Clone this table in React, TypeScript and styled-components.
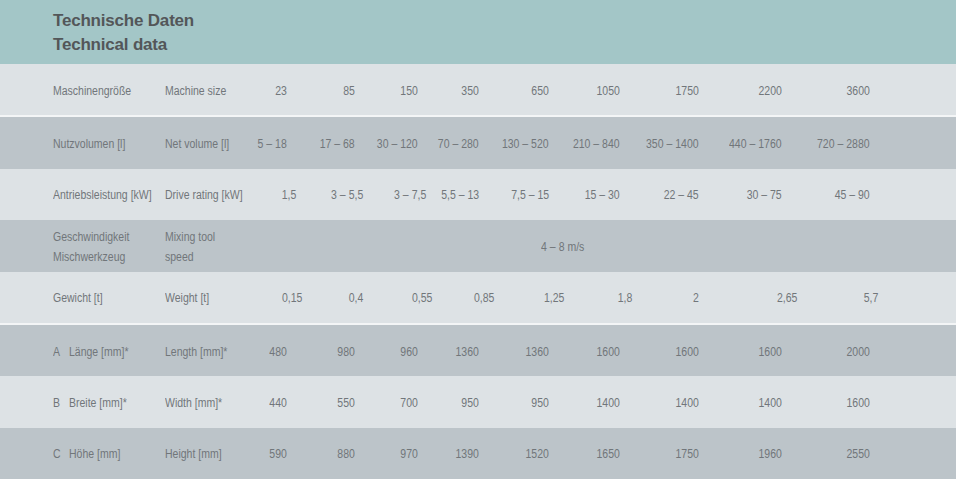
import React from "react";
import styled, { createGlobalStyle } from "styled-components";

type Tone = "light" | "dark";

type Row = {
  mark?: string;
  de: string[];
  en: string[];
  values?: string[];
  nudges?: number[];
  span?: string;
  tone: Tone;
  divider?: boolean;
};

const rows: Row[] = [
  {
    de: ["Maschinengröße"],
    en: ["Machine size"],
    values: ["23", "85", "150", "350", "650", "1050", "1750", "2200", "3600"],
    tone: "light",
    divider: true,
  },
  {
    de: ["Nutzvolumen [l]"],
    en: ["Net volume [l]"],
    values: ["5 – 18", "17 – 68", "30 – 120", "70 – 280", "130 – 520", "210 – 840", "350 – 1400", "440 – 1760", "720 – 2880"],
    tone: "dark",
  },
  {
    de: ["Antriebsleistung [kW]"],
    en: ["Drive rating [kW]"],
    values: ["1,5", "3 – 5,5", "3 – 7,5", "5,5 – 13", "7,5 – 15", "15 – 30", "22 – 45", "30 – 75", "45 – 90"],
    nudges: [9, 8, 8, 0, 0, 0, 0, 0, 0],
    tone: "light",
  },
  {
    de: ["Geschwindigkeit", "Mischwerkzeug"],
    en: ["Mixing tool", "speed"],
    span: "4 – 8 m/s",
    tone: "dark",
  },
  {
    de: ["Gewicht [t]"],
    en: ["Weight [t]"],
    values: ["0,15", "0,4", "0,55", "0,85", "1,25", "1,8", "2", "2,65", "5,7"],
    nudges: [15, 8, 14, 15, 15, 12, 0, 15, 8],
    tone: "light",
    divider: true,
  },
  {
    mark: "A",
    de: ["Länge [mm]*"],
    en: ["Length [mm]*"],
    values: ["480", "980", "960", "1360", "1360", "1600", "1600", "1600", "2000"],
    tone: "dark",
  },
  {
    mark: "B",
    de: ["Breite [mm]*"],
    en: ["Width [mm]*"],
    values: ["440", "550", "700", "950", "950", "1400", "1400", "1400", "1600"],
    tone: "light",
  },
  {
    mark: "C",
    de: ["Höhe [mm]"],
    en: ["Height [mm]"],
    values: ["590", "880", "970", "1390", "1520", "1650", "1750", "1960", "2550"],
    tone: "dark",
  },
];

const App = () => {
  return (
    <>
      <GlobalStyle />
      <Sheet>
        <Header>
          <Title>Technische Daten</Title>
          <Title>Technical data</Title>
        </Header>
        {rows.map((row, i) => (
          <React.Fragment key={i}>
            <DataRow tone={row.tone}>
              <Label>
                {row.mark && <Mark>{row.mark}</Mark>}
                <Lines>
                  {row.de.map((line) => (
                    <span key={line}>{line}</span>
                  ))}
                </Lines>
              </Label>
              <Label>
                <Lines>
                  {row.en.map((line) => (
                    <span key={line}>{line}</span>
                  ))}
                </Lines>
              </Label>
              {row.span && (
                <Spanned>
                  <Narrow origin="center">{row.span}</Narrow>
                </Spanned>
              )}
              {row.values?.map((v, j) => (
                <Value key={j} nudge={row.nudges ? row.nudges[j] : 0}>
                  <Narrow origin="right">{v}</Narrow>
                </Value>
              ))}
            </DataRow>
            {row.divider && <Divider />}
          </React.Fragment>
        ))}
      </Sheet>
    </>
  );
};

export default App;

const GlobalStyle = createGlobalStyle`
  html, body {
    margin: 0;
    padding: 0;
    background: #bcc4c9;
  }
`;

const Sheet = styled.div`
  display: flex;
  flex-direction: column;
  height: 479px;
  overflow: hidden;
`;

const Header = styled.div`
  height: 64px;
  flex: none;
  box-sizing: border-box;
  padding: 9px 0 0 53px;
  background: #a3c6c7;
`;

const Title = styled.div`
  font-family: "Liberation Sans", Arial, sans-serif;
  font-weight: 700;
  font-size: 17px;
  letter-spacing: -0.2px;
  line-height: 24px;
  color: #535659;
`;

const DataRow = styled.div<{ tone: Tone }>`
  flex: 1;
  display: grid;
  grid-template-columns: 53px 112px 85px 37px 68px 63px 61px 70px 71px 79px 83px 88px 1fr;
  align-items: center;
  background: ${(p) => (p.tone === "light" ? "#dde2e5" : "#bcc4c9")};
  font-family: "Liberation Sans", Arial, sans-serif;
  font-size: 12.5px;
  color: #71767a;
  padding-top: 2px;
  box-sizing: border-box;
`;

const Divider = styled.div`
  height: 2px;
  flex: none;
  background: #f3f5f6;
`;

const Label = styled.div`
  display: flex;
  align-items: flex-start;
  line-height: 20px;
  &:first-child {
    grid-column: 2;
  }
`;

const Mark = styled.span`
  width: 16px;
  flex: none;
  transform: scaleX(0.84);
  transform-origin: left center;
`;

const Lines = styled.div`
  display: flex;
  flex-direction: column;
  white-space: nowrap;
  transform: scaleX(0.84);
  transform-origin: left center;
`;

const Narrow = styled.span<{ origin: "right" | "center" }>`
  display: inline-block;
  white-space: nowrap;
  transform: scaleX(0.84);
  transform-origin: ${(p) => p.origin} center;
`;

const Value = styled.div<{ nudge: number }>`
  text-align: right;
  margin-right: ${(p) => -p.nudge}px;
`;

const Spanned = styled.div`
  grid-column: 4 / 13;
  text-align: center;
  padding-left: 6px;
`;
